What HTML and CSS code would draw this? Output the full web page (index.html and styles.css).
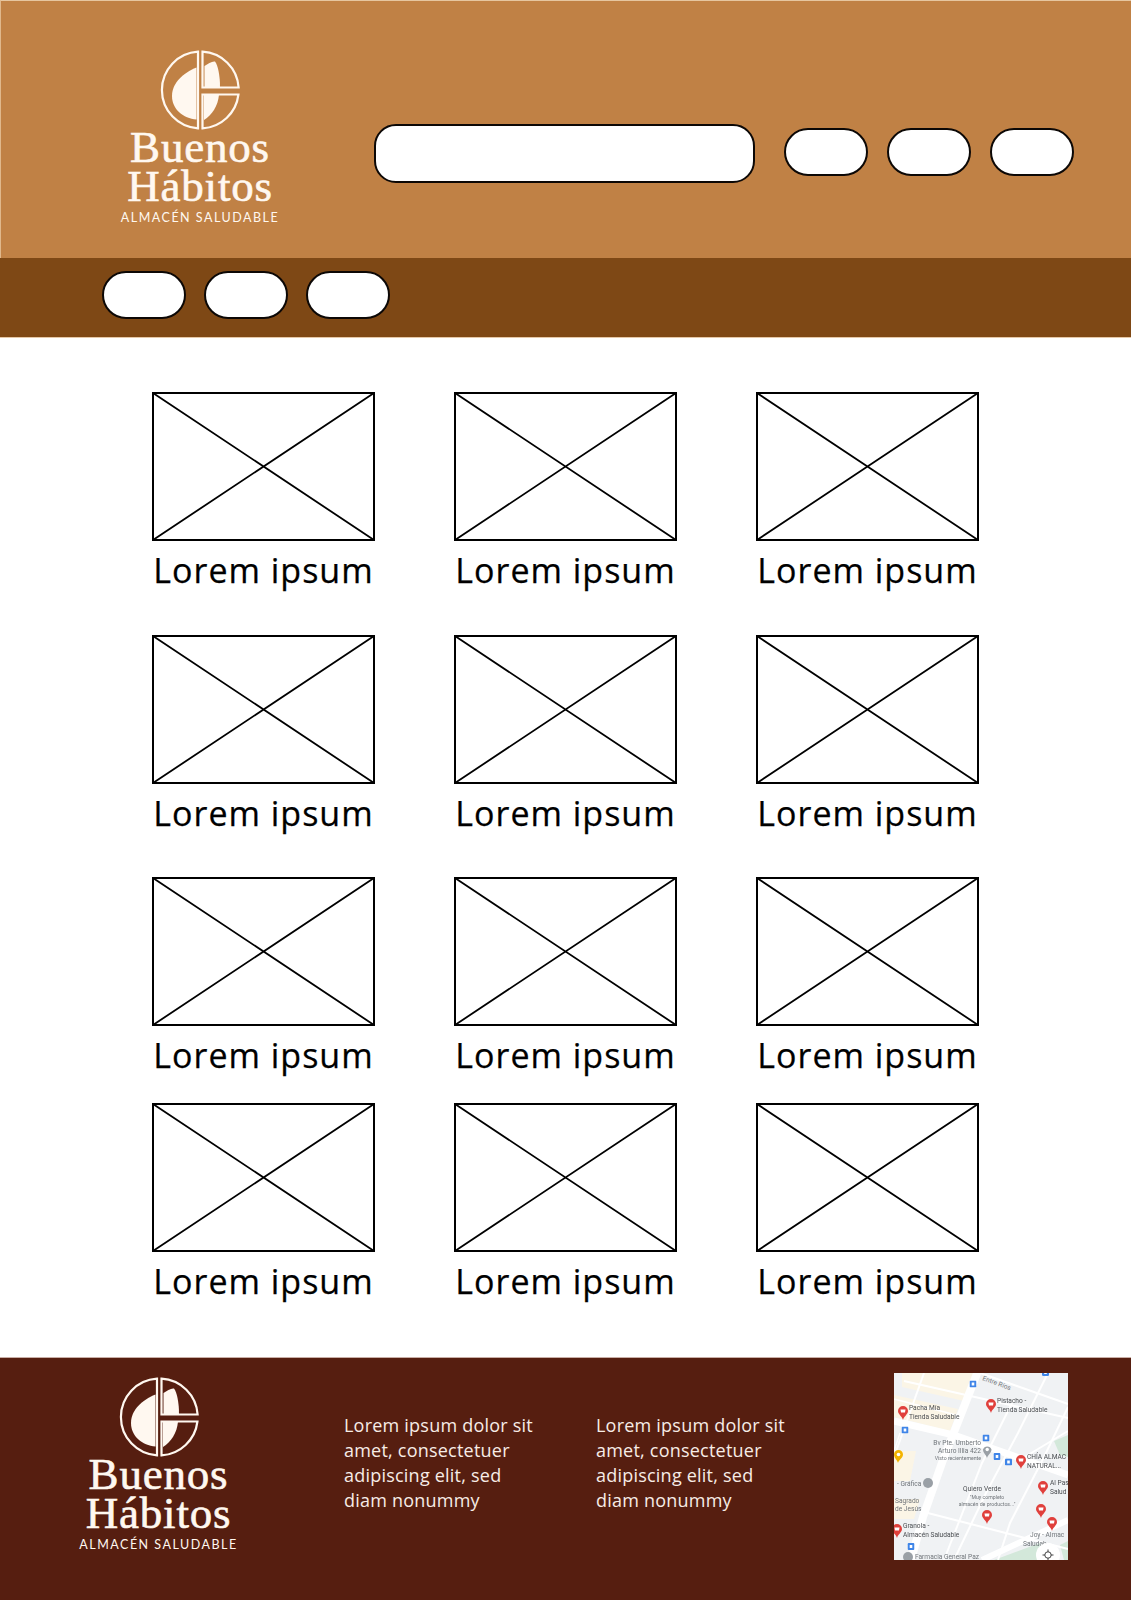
FILE: index.html
```html
<!DOCTYPE html>
<html lang="es">
<head>
<meta charset="utf-8">
<title>Buenos Hábitos</title>
<link rel="stylesheet" href="styles.css">
</head>
<body>
<svg class="defs" width="0" height="0" aria-hidden="true">
  <symbol id="mark" viewBox="0 0 90 80" overflow="visible">
    <g fill="none" stroke="currentColor" stroke-width="2.200">
      <path d="M43 3.670A38.400 38.400 0 0 0 43 80.330Z"/>
      <path d="M47.500 3.660V39.500H83.620A38.400 38.400 0 0 0 47.500 3.660Z"/>
      <path d="M47.500 80.340V46.500H83.440A38.400 38.400 0 0 1 47.500 80.340Z"/>
    </g>
    <g fill="currentColor">
      <path d="M49.500 18C53 15.500 57 13 60 13.500C63 17 65 28 65 39H49.500Z"/>
      <path d="M49 46.500H64C63 58 57 67 49 72Z"/>
      <path d="M41.500 19.500C28 25 17 35 17 48C17 61 28 70.500 41.500 71.500Z"/>
    </g>
  </symbol>
  <symbol id="pin" viewBox="0 0 10 14">
    <path fill="#e0403c" d="M5 14C4.300 10.500 0 8.300 0 5A5 5 0 0 1 10 5C10 8.300 5.700 10.500 5 14Z"/>
    <path fill="#fff" d="M2.500 3.500H7.500L7 6.500H3Z"/>
  </symbol>
  <symbol id="stop" viewBox="0 0 7 7">
    <rect width="7" height="7" rx="1.200" fill="#3f85e8"/>
    <rect x="2.200" y="2" width="2.600" height="3" fill="#fff"/>
  </symbol>
  <symbol id="thumb" viewBox="0 0 223 149">
    <rect x="1" y="1" width="221" height="147" fill="#fff" stroke="#000" stroke-width="2"/>
    <path d="M1 1L222 148M222 1L1 148" stroke="#000" stroke-width="1.800" fill="none"/>
  </symbol>
</svg>

<header class="header">
  <a class="logo">
    <svg class="logo-mark"><use href="#mark"/></svg>
    <span class="logo-name">Buenos<br>Hábitos</span>
    <span class="logo-tag">ALMACÉN SALUDABLE</span>
  </a>
  <div class="search"></div>
  <div class="header-pills">
    <div class="pill"></div>
    <div class="pill"></div>
    <div class="pill"></div>
  </div>
</header>

<nav class="nav">
  <div class="pill"></div>
  <div class="pill"></div>
  <div class="pill"></div>
</nav>

<main class="grid">
  <article class="card"><svg class="thumb"><use href="#thumb"/></svg><p class="caption">Lorem ipsum</p></article>
  <article class="card"><svg class="thumb"><use href="#thumb"/></svg><p class="caption">Lorem ipsum</p></article>
  <article class="card"><svg class="thumb"><use href="#thumb"/></svg><p class="caption">Lorem ipsum</p></article>
  <article class="card"><svg class="thumb"><use href="#thumb"/></svg><p class="caption">Lorem ipsum</p></article>
  <article class="card"><svg class="thumb"><use href="#thumb"/></svg><p class="caption">Lorem ipsum</p></article>
  <article class="card"><svg class="thumb"><use href="#thumb"/></svg><p class="caption">Lorem ipsum</p></article>
  <article class="card"><svg class="thumb"><use href="#thumb"/></svg><p class="caption">Lorem ipsum</p></article>
  <article class="card"><svg class="thumb"><use href="#thumb"/></svg><p class="caption">Lorem ipsum</p></article>
  <article class="card"><svg class="thumb"><use href="#thumb"/></svg><p class="caption">Lorem ipsum</p></article>
  <article class="card"><svg class="thumb"><use href="#thumb"/></svg><p class="caption">Lorem ipsum</p></article>
  <article class="card"><svg class="thumb"><use href="#thumb"/></svg><p class="caption">Lorem ipsum</p></article>
  <article class="card"><svg class="thumb"><use href="#thumb"/></svg><p class="caption">Lorem ipsum</p></article>
</main>

<footer class="footer">
  <a class="logo">
    <svg class="logo-mark"><use href="#mark"/></svg>
    <span class="logo-name">Buenos<br>Hábitos</span>
    <span class="logo-tag">ALMACÉN SALUDABLE</span>
  </a>
  <p class="footer-text">Lorem ipsum dolor sit<br>amet, consectetuer<br>adipiscing elit, sed<br>diam nonummy</p>
  <p class="footer-text">Lorem ipsum dolor sit<br>amet, consectetuer<br>adipiscing elit, sed<br>diam nonummy</p>
  <svg class="map" viewBox="0 0 174 187">
    <g class="map-layer">
      <rect width="174" height="187" fill="#f0f2f4"/>
      <g fill="#fbf5e6">
        <path d="M8 0H82L70 28L8 14Z"/>
        <path d="M0 22L64 36L56 58L0 44Z"/>
        <path d="M0 78H22L16 108H0Z"/>
        <path d="M0 126H26L20 146H0Z"/>
      </g>
      <g fill="#d3e8da">
        <path d="M160 68L174 62V84L166 82Z"/>
        <path d="M100 187L146 170L150 187Z"/>
        <path d="M166 172L174 168V187H170Z"/>
      </g>
      <g fill="none" stroke="#fff">
        <path stroke-width="8" d="M84 -2L49 87L29 144L17 187"/>
        <path stroke-width="7" d="M0 48L60 62L174 102"/>
        <path stroke-width="6" d="M88 187L174 147"/>
        <path stroke-width="2" d="M10 8L174 45"/>
        <path stroke-width="2" d="M86 0L174 31"/>
        <path stroke-width="2" d="M26 138L174 176"/>
        <path stroke-width="2" d="M154 0L124 60L92 120L60 187"/>
        <path stroke-width="2" d="M120 26L88 90L50 187"/>
        <path stroke-width="2" d="M174 34L150 84L116 150L104 187"/>
        <path stroke-width="2" d="M30 0L0 84"/>
        <path stroke-width="1.500" d="M0 26L70 44"/>
        <path stroke-width="1.500" d="M6 60L0 78"/>
        <path stroke-width="2" d="M174 58L124 88"/>
      </g>
      <g class="map-label">
        <text x="88" y="7" transform="rotate(20 88 7)">Entre Ríos</text>
        <text class="map-strong" x="15" y="37">Pacha Mía</text>
        <text class="map-strong" x="15" y="46">Tienda Saludable</text>
        <text class="map-strong" x="103" y="30">Pistacho -</text>
        <text class="map-strong" x="103" y="39">Tienda Saludable</text>
        <text class="map-end" x="87" y="72">Bv Pte. Umberto</text>
        <text class="map-end" x="87" y="80">Arturo Illia 422</text>
        <text class="map-end map-small" x="87" y="87">Visto recientemente</text>
        <text class="map-strong" x="133" y="86">CHÍA ALMAC</text>
        <text class="map-strong" x="133" y="95">NATURAL...</text>
        <text x="3" y="113">- Gráfica</text>
        <text class="map-strong map-mid" x="88" y="118">Quiero Verde</text>
        <text class="map-mid map-small" x="93" y="126">"Muy completo</text>
        <text class="map-mid map-small" x="93" y="133">almacén de productos..."</text>
        <text x="1" y="130">Sagrado</text>
        <text x="1" y="138">de Jesús</text>
        <text class="map-strong" x="9" y="155">Granola -</text>
        <text class="map-strong" x="9" y="164">Almacén Saludable</text>
        <text class="map-strong" x="156" y="112">Al Pas</text>
        <text class="map-strong" x="156" y="121">Salud</text>
        <text x="136" y="164">Joy - Almac</text>
        <text x="129" y="173">Saludab</text>
        <text x="21" y="186">Farmacia General Paz</text>
      </g>
      <use href="#stop" x="75.500" y="7.500" width="7" height="7"/>
      <use href="#stop" x="7.500" y="53.500" width="7" height="7"/>
      <use href="#stop" x="88.500" y="61.500" width="7" height="7"/>
      <use href="#stop" x="99.500" y="80" width="7" height="7"/>
      <use href="#stop" x="111" y="85.500" width="7" height="7"/>
      <use href="#stop" x="13.500" y="170" width="7" height="7"/>
      <use href="#stop" x="148" y="-4" width="7" height="7"/>
      <use href="#pin" x="4" y="33" width="10" height="14"/>
      <use href="#pin" x="92" y="26" width="10" height="14"/>
      <use href="#pin" x="122" y="82" width="10" height="14"/>
      <use href="#pin" x="144" y="108" width="10" height="14"/>
      <use href="#pin" x="142" y="131" width="10" height="14"/>
      <use href="#pin" x="153" y="144" width="10" height="14"/>
      <use href="#pin" x="88" y="137" width="10" height="14"/>
      <use href="#pin" x="-2" y="151" width="10" height="14"/>
      <path fill="#f4b400" d="M4 90C3.500 87 0 85 0 81.500A4.500 4.500 0 0 1 9 81.500C9 85 4.500 87 4 90Z"/>
      <circle cx="4.500" cy="81.500" r="1.800" fill="#fff"/>
      <path fill="#9aa0a6" d="M93 85C92.500 82 89 80 89 76.500A4.500 4.500 0 0 1 97.500 76.500C97.500 80 93.500 82 93 85Z"/>
      <circle cx="93.200" cy="76.500" r="1.700" fill="#fff"/>
      <circle cx="34" cy="110" r="5" fill="#9aa0a6"/>
      <circle cx="14" cy="184" r="5" fill="#9aa0a6"/>
      <circle cx="154" cy="182" r="12" fill="#fff"/>
    </g>
    <circle cx="154" cy="182" r="3.200" fill="none" stroke="#444" stroke-width="1"/>
    <path d="M154 176.500V179M154 185V187M148.500 182H151M157 182H159.500" stroke="#444" stroke-width="1"/>
  </svg>
</footer>
</body>
</html>
```

FILE: styles.css
```css
* { box-sizing: border-box; }

body {
  margin: 0;
  background: #fff;
  font-family: "Open Sans", "Liberation Sans", sans-serif;
}

.defs { display: block; height: 0; }

.header {
  display: flex;
  align-items: flex-start;
  height: 258px;
  padding: 47px 58px 0 119px;
  background: #c08145;
  border-top: 1px solid #e6c6a0;
  border-left: 1px solid #e0b88c;
}

.logo {
  display: flex;
  flex-direction: column;
  align-items: center;
  flex: none;
  width: 160px;
  color: #fff8f0;
}

.logo-mark {
  display: block;
  flex: none;
  width: 90px;
  height: 80px;
  overflow: visible;
}

.logo-name {
  display: block;
  font-family: "Liberation Serif", serif;
  font-size: 45px;
  line-height: 39px;
  text-align: center;
  letter-spacing: 0.8px;
  -webkit-text-stroke: 0.6px currentColor;
}

.logo-tag {
  display: block;
  margin-top: 4px;
  font-family: Lato, "Open Sans", sans-serif;
  font-size: 12.500px;
  line-height: 16px;
  letter-spacing: 1.500px;
  white-space: nowrap;
}

.search {
  flex: none;
  width: 381px;
  height: 59px;
  margin: 76px 0 0 94px;
  background: #fff;
  border: 2px solid #0c0806;
  border-radius: 22px;
}

.header-pills {
  display: flex;
  gap: 19.500px;
  margin: 80px 0 0 29px;
}

.pill {
  flex: none;
  width: 83.500px;
  height: 48px;
  background: #fff;
  border: 2px solid #0c0806;
  border-radius: 24px;
}

.nav {
  display: flex;
  gap: 18px;
  height: 80px;
  padding: 13px 0 0 102px;
  background: #7e4815;
  border-bottom: 1px solid #e6c8a6;
}

.nav .pill { width: 84px; }

.grid {
  display: grid;
  grid-template-columns: repeat(3, 223px);
  grid-template-rows: 243px 242px 226px auto;
  column-gap: 79px;
  height: 1019px;
  padding: 54px 0 0 152px;
}

.card { min-width: 0; }

.thumb {
  display: block;
  width: 223px;
  height: 149px;
}

.caption {
  margin: 8px 0 0;
  font-size: 34px;
  line-height: 42px;
  letter-spacing: 1px;
  text-align: center;
  color: #000;
  white-space: nowrap;
  -webkit-text-stroke: 0.25px currentColor;
}

.footer {
  display: flex;
  align-items: flex-start;
  height: 243px;
  padding: 15px 0 0 79px;
  background: #561e10;
  border-top: 1px solid #c9aea6;
}

.footer .logo {
  width: 159px;
  margin-top: 2px;
}

.footer-text {
  flex: none;
  width: 252px;
  margin: 40px 0 0;
  color: #f7ece6;
  font-size: 18px;
  letter-spacing: 0.220px;
  line-height: 25px;
  white-space: nowrap;
}

.footer .logo + .footer-text {
  margin-left: 106px;
}

.map {
  display: block;
  flex: none;
  width: 174px;
  height: 187px;
  margin-left: 46px;
  overflow: hidden;
}

.map-layer { filter: blur(0.6px); }

.map-label text {
  font-family: Roboto, "Open Sans", sans-serif;
  font-size: 6.600px;
  fill: #70757a;
}

.map-label .map-strong { fill: #4a4d51; }
.map-label .map-small { font-size: 5.200px; }
.map-end { text-anchor: end; }
.map-mid { text-anchor: middle; }
```
